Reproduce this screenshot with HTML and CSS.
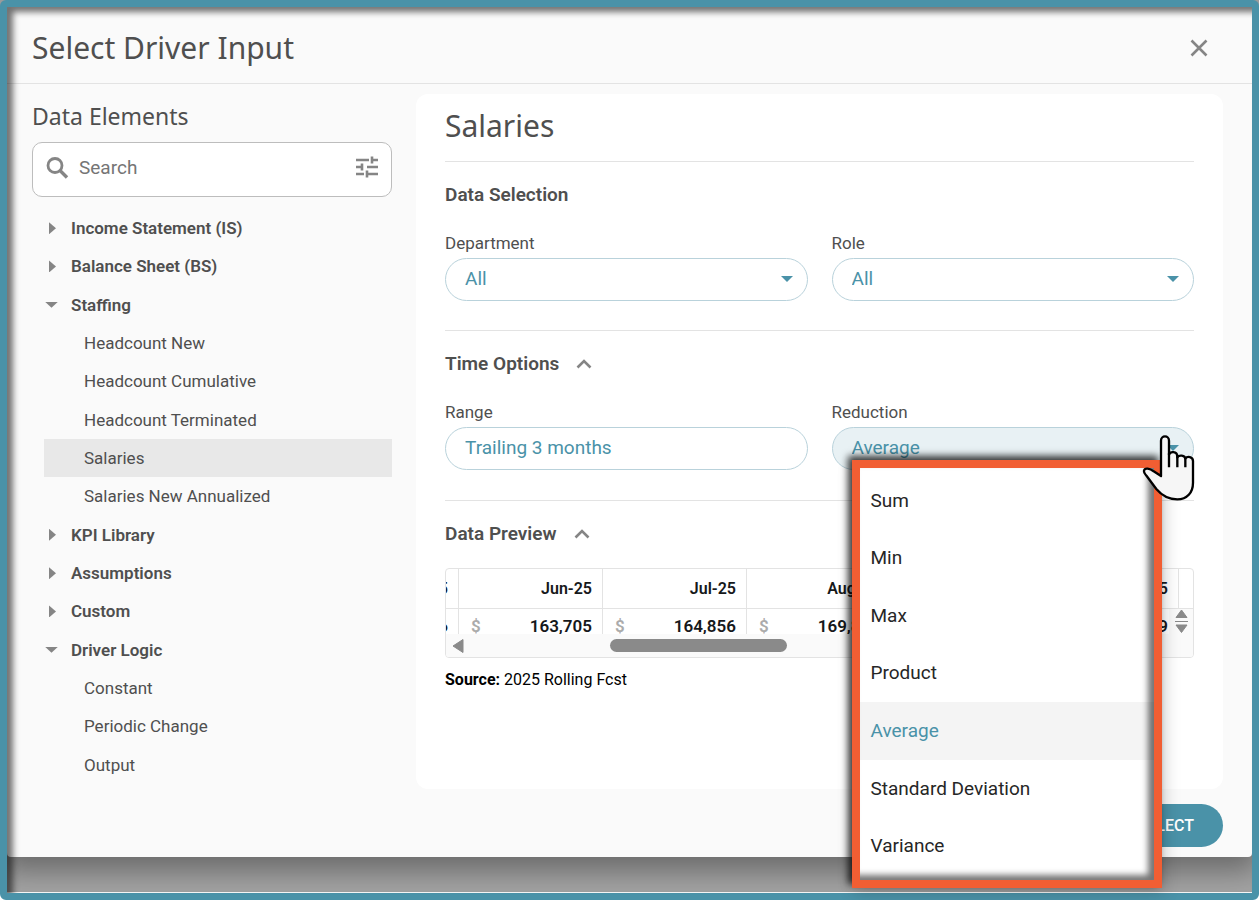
FILE: index.html
```html
<!DOCTYPE html>
<html lang="en">
<head>
    <meta charset="UTF-8">
    <meta name="viewport" content="width=device-width, initial-scale=1.0">
    <title>Select Driver Input</title>
    <link rel="stylesheet" href="styles.css">
</head>
<body>

<div class="screen">
    <main class="dialog">
        <header class="dialog-header">
            <h1>Select Driver Input</h1>
            <button class="icon-button" aria-label="Close">
                <svg width="18" height="18" viewBox="0 0 18 18"><path d="M1.5 1.5l15 15M16.5 1.5l-15 15" fill="none" stroke="#858585" stroke-width="2.6"/></svg>
            </button>
        </header>

        <div class="dialog-body">
            <aside class="sidebar">
                <h2>Data Elements</h2>
                <div class="search">
                    <svg width="24" height="24" viewBox="0 0 24 24"><circle cx="9" cy="9.5" r="7" fill="none" stroke="#858585" stroke-width="2.8"/><path d="M14 14.500l7 7" stroke="#858585" stroke-width="3.400"/></svg>
                    <input type="text" placeholder="Search" aria-label="Search">
                    <button class="icon-button" aria-label="Filter">
                        <svg width="24" height="24" viewBox="0 0 24 24"><path d="M1 4h13M19 4h4M17 .500v7M15.800 4h4M1 11h7M12 11h11M7 7.500v7M1 18h8M12 18h11M12 14.500v7" fill="none" stroke="#858585" stroke-width="2.600"/></svg>
                    </button>
                </div>
                <ul class="tree">
                    <li class="group"><span class="arrow"></span>Income Statement (IS)</li>
                    <li class="group"><span class="arrow"></span>Balance Sheet (BS)</li>
                    <li class="group"><span class="arrow open"></span>Staffing</li>
                    <li class="leaf">Headcount New</li>
                    <li class="leaf">Headcount Cumulative</li>
                    <li class="leaf">Headcount Terminated</li>
                    <li class="leaf selected">Salaries</li>
                    <li class="leaf">Salaries New Annualized</li>
                    <li class="group"><span class="arrow"></span>KPI Library</li>
                    <li class="group"><span class="arrow"></span>Assumptions</li>
                    <li class="group"><span class="arrow"></span>Custom</li>
                    <li class="group"><span class="arrow open"></span>Driver Logic</li>
                    <li class="leaf">Constant</li>
                    <li class="leaf">Periodic Change</li>
                    <li class="leaf">Output</li>
                </ul>
            </aside>

            <section class="panel">
                <h2>Salaries</h2>

                <div class="section">
                    <h3>Data Selection</h3>
                    <div class="fields">
                        <div class="field">
                            <label for="department">Department</label>
                            <div class="control has-caret">
                                <select id="department"><option>All</option></select>
                            </div>
                        </div>
                        <div class="field">
                            <label for="role">Role</label>
                            <div class="control has-caret">
                                <select id="role"><option>All</option></select>
                            </div>
                        </div>
                    </div>
                </div>

                <div class="section">
                    <h3>Time Options <svg width="16" height="10" viewBox="0 0 16 10"><path d="M1.500 8.500L8 2l6.500 6.500" fill="none" stroke="#858585" stroke-width="2.600"/></svg></h3>
                    <div class="fields">
                        <div class="field">
                            <label for="range">Range</label>
                            <div class="control">
                                <input type="text" id="range" value="Trailing 3 months">
                            </div>
                        </div>
                        <div class="field">
                            <label for="reduction">Reduction</label>
                            <div class="control has-caret active">
                                <select id="reduction"><option>Average</option></select>
                                <ul class="menu">
                                    <li><button>Sum</button></li>
                                    <li><button>Min</button></li>
                                    <li><button>Max</button></li>
                                    <li><button>Product</button></li>
                                    <li><button class="current">Average</button></li>
                                    <li><button>Standard Deviation</button></li>
                                    <li><button>Variance</button></li>
                                </ul>
                                <svg class="pointer" width="54" height="68" viewBox="36 42 162 204">
                                    <path d="M42 152C44 142 60 145 71 154L93 168V62C93 45 117 45 117 62V104C121 93 141 94 142 108V112C147 104 165 105 166 116C172 107 189 110 189 123V188C189 218 171 238 142 238C113 238 95 226 79 207L50 168Q41 157 42 152Z" fill="#f6f6f6" stroke="#000" stroke-width="7" stroke-linejoin="round"/>
                                    <path d="M117 100V142M142 108V142M166 114V142" fill="none" stroke="#000" stroke-width="7"/>
                                </svg>
                            </div>
                        </div>
                    </div>
                </div>

                <div class="section">
                    <h3>Data Preview <svg width="16" height="10" viewBox="0 0 16 10"><path d="M1.500 8.500L8 2l6.500 6.500" fill="none" stroke="#858585" stroke-width="2.600"/></svg></h3>
                    <div class="preview">
                        <div class="preview-view">
                            <table>
                                <thead>
                                    <tr><th>May-25</th><th>Jun-25</th><th>Jul-25</th><th>Aug-25</th><th>Sep-25</th><th>Oct-25</th><th></th></tr>
                                </thead>
                                <tbody>
                                    <tr>
                                        <td><span class="currency">$</span>162,546</td>
                                        <td><span class="currency">$</span>163,705</td>
                                        <td><span class="currency">$</span>164,856</td>
                                        <td><span class="currency">$</span>169,800</td>
                                        <td><span class="currency">$</span>170,950</td>
                                        <td><span class="currency">$</span>172,109</td>
                                        <td></td>
                                    </tr>
                                </tbody>
                            </table>
                            <div class="scroll-y">
                                <svg width="13" height="24" viewBox="0 0 13 24"><path d="M6.500 1L12 8.500H1zM6.500 23.500L12 16H1z" fill="#8a8a8a" stroke="#8a8a8a" stroke-linejoin="round"/><path d="M0 12.500h13" stroke="#8a8a8a"/></svg>
                            </div>
                        </div>
                        <div class="scroll-x">
                            <svg width="12" height="14" viewBox="0 0 12 14"><path d="M1 7l10-6.500v13z" fill="#8a8a8a" stroke="#8a8a8a" stroke-linejoin="round"/></svg>
                            <span class="thumb"></span>
                            <svg width="12" height="14" viewBox="0 0 12 14"><path d="M11 7L1 .5v13z" fill="#8a8a8a" stroke="#8a8a8a" stroke-linejoin="round"/></svg>
                        </div>
                    </div>
                    <p class="source"><b>Source:</b> 2025 Rolling Fcst</p>
                </div>
            </section>
        </div>

        <footer class="dialog-footer">
            <button class="select-button">SELECT</button>
        </footer>
    </main>
</div>

</body>
</html>
```

FILE: styles.css
```css
* {
    box-sizing: border-box;
}

body {
    margin: 0;
    font-family: Roboto, "Liberation Sans", sans-serif;
    font-size: 17px;
    color: #4f4f4f;
    background: #fff;
}

h1, h2, h3, p, ul {
    margin: 0;
    padding: 0;
}

ul {
    list-style: none;
}

button, input, select {
    font: inherit;
    color: inherit;
    border: none;
    background: none;
    padding: 0;
    cursor: pointer;
}

svg {
    display: block;
    flex: none;
}

.screen {
    position: relative;
    min-height: 100vh;
    padding: 7px 7px 43px;
    overflow: hidden;
    background: linear-gradient(#a3a3a3, #a3a3a3) no-repeat 0 0 / 100% calc(100% - 8px);
}

/* teal frame with its inner shadow, over everything */
.screen::after {
    content: "";
    position: absolute;
    inset: 0;
    border: 7px solid #4a92a8;
    border-radius: 6px;
    box-shadow: inset 6px 5px 6px rgba(0, 0, 0, 0.55);
    pointer-events: none;
}

.dialog {
    background: #fafafa;
    border-radius: 0 0 4px 4px;
    box-shadow: 0 8px 28px 6px rgba(0, 0, 0, 0.35);
}

.dialog-header {
    display: flex;
    justify-content: space-between;
    align-items: center;
    height: 77px;
    padding: 5px 44px 0 25px;
    border-bottom: 1px solid #e3e3e3;
}

h1, h2 {
    font-family: "Noto Sans", "Open Sans", sans-serif;
    font-weight: 400;
}

h1 {
    font-size: 30px;
    line-height: 40px;
}

.dialog-body {
    display: flex;
    gap: 24px;
    padding: 10px 29px 0 25px;
}

.sidebar {
    flex: none;
    width: 360px;
    padding-top: 6px;
}

.sidebar h2 {
    font-size: 23px;
    line-height: 32px;
}

.search {
    display: flex;
    align-items: center;
    gap: 9px;
    height: 55px;
    margin-top: 10px;
    padding: 0 12px 4px 13px;
    border: 1px solid #bdbdbd;
    border-radius: 10px;
    background: #fff;
}

.search input {
    flex: 1;
    min-width: 0;
    font-size: 19px;
    outline: none;
}

.search input::placeholder {
    color: #757575;
    opacity: 1;
}

.tree {
    display: grid;
    grid-auto-rows: 1fr;
    height: 575px;
    margin: 12px 0 0 12px;
}

.tree li {
    display: flex;
    align-items: center;
    cursor: pointer;
}

.group {
    font-weight: 600;
}

.leaf {
    padding-left: 40px;
}

.selected {
    background: #e8e8e8;
}

.arrow {
    width: 27px;
}

.arrow::before {
    content: "";
    display: block;
    width: 7px;
    height: 12px;
    margin-left: 5px;
    background: #858585;
    clip-path: polygon(0 0, 100% 50%, 0 100%);
}

.arrow.open::before {
    width: 13px;
    height: 6px;
    margin-left: 1px;
    clip-path: polygon(0 0, 100% 0, 50% 100%);
}

.panel {
    flex: 1;
    min-width: 0;
    min-height: 695px;
    padding: 0 29px;
    border-radius: 12px;
    background: #fff;
}

.panel h2 {
    padding-bottom: 3px;
    font-size: 30px;
    line-height: 64px;
}

.section {
    padding: 20px 0 29px;
    border-top: 1px solid #e3e3e3;
}

.section + .section {
    padding-bottom: 30px;
}

h3 {
    display: flex;
    align-items: center;
    gap: 17px;
    font-size: 19px;
    font-weight: 600;
    line-height: 26px;
}

.fields {
    display: grid;
    grid-template-columns: 1fr 1fr;
    gap: 24px;
    margin-top: 25px;
}

.field label {
    display: block;
    line-height: 20px;
    margin-bottom: 5px;
}

.control {
    position: relative;
}

.control select, .control input {
    display: block;
    appearance: none;
    width: 100%;
    height: 43px;
    padding: 0 19px 3px;
    border: 1px solid #b9d2db;
    border-radius: 22px;
    background: #fff;
    color: #4a92a8;
    font-size: 19px;
}

.has-caret::after {
    content: "";
    position: absolute;
    top: 18px;
    right: 15px;
    border: 6px solid transparent;
    border-top-color: #4a92a8;
    border-bottom: none;
}

.control.active select {
    background: #e8f1f4;
}

.menu {
    position: absolute;
    z-index: 1;
    top: 33px;
    left: 20px;
    display: grid;
    grid-auto-rows: 1fr;
    width: 310px;
    height: 428px;
    padding: 4px 0 5px;
    border: 8px solid #f15e33;
    background: #fff;
    box-shadow: -4px -4px 7px rgba(0, 0, 0, 0.75), 2px 4px 16px rgba(0, 0, 0, 0.2);
}

.menu::after {
    content: "";
    position: absolute;
    inset: 0;
    box-shadow: inset -6px -5px 6px rgba(0, 0, 0, 0.55);
    pointer-events: none;
}

.menu button {
    display: block;
    width: 100%;
    height: 100%;
    padding: 0 0 1px 11px;
    font-size: 19px;
    text-align: left;
    color: #262626;
}

.menu .current {
    color: #4a92a8;
    background: #f4f4f4;
}

.pointer {
    position: absolute;
    z-index: 2;
    top: 7px;
    right: -2px;
}

.preview {
    margin-top: 21px;
    border: 1px solid #e3e3e3;
    border-radius: 4px;
    overflow: hidden;
}

.preview-view {
    position: relative;
    height: 65px;
    overflow: hidden;
}

/* scrolled partway through the first month */
.preview table {
    width: 880px;
    margin-left: -131px;
    table-layout: fixed;
    border-collapse: separate;
    border-spacing: 0;
    font-weight: 600;
    color: #16181a;
}

.preview th, .preview td {
    width: 144px;
    padding: 0 10px 0 12px;
    border-right: 1px solid #e3e3e3;
    border-bottom: 1px solid #e3e3e3;
    text-align: right;
    font-weight: inherit;
}

.preview th:last-child, .preview td:last-child {
    width: auto;
    padding: 0;
    border-right: none;
}

.preview th {
    height: 40px;
    font-size: 16px;
}

.preview td {
    height: 33px;
    border-bottom: none;
}

.currency {
    float: left;
    color: #ababab;
}

.scroll-y {
    position: absolute;
    top: 40px;
    right: 0;
    bottom: 0;
    display: flex;
    justify-content: center;
    width: 24px;
    background: #fafafa;
}

.scroll-x {
    display: flex;
    align-items: center;
    justify-content: space-between;
    height: 23px;
    padding: 0 30px 0 6px;
    background: #fafafa;
}

.thumb {
    width: 177px;
    height: 13px;
    margin: 0 auto 0 146px;
    border-radius: 7px;
    background: #8a8a8a;
}

.source {
    margin-top: 12px;
    font-size: 16px;
    line-height: 20px;
    color: #000;
}

.dialog-footer {
    display: flex;
    justify-content: flex-end;
    padding: 15px 29px 10px;
}

.select-button {
    height: 43px;
    padding: 0 29px;
    border-radius: 22px;
    background: #4a92a8;
    color: #fff;
    font-size: 16px;
    font-weight: 500;
}
```
